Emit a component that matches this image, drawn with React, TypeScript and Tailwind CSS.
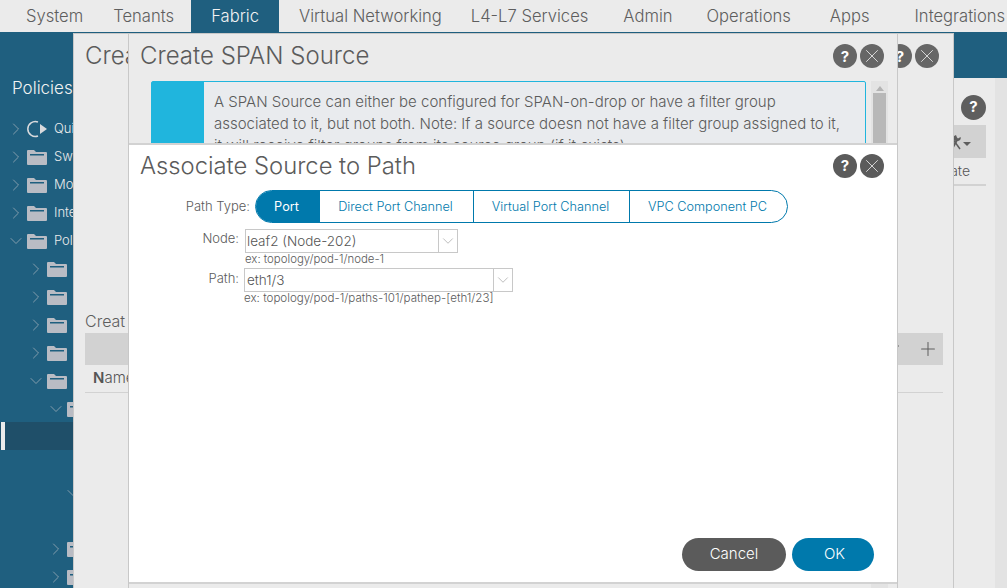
import { ChevronDown, ChevronRight, Plus, X } from "lucide-react";

const navItems = [
    { label: "System", cls: "ml-[26px]" },
    { label: "Tenants", cls: "ml-[30px]" },
    { label: "Virtual Networking", cls: "ml-[20px]" },
    { label: "L4-L7 Services", cls: "ml-[29px]" },
    { label: "Admin", cls: "ml-[35px]" },
    { label: "Operations", cls: "ml-[34px]" },
    { label: "Apps", cls: "ml-[39px]" },
    { label: "Integrations", cls: "ml-[45px]" },
];

const Folder = () => (
    <svg width="20" height="16" viewBox="0 0 20 16" className="shrink-0">
        <path d="M0 2 Q0 1 1 1 H7 L9 3 H19 Q20 3 20 4 V15 Q20 16 19 16 H1 Q0 16 0 15 Z" fill="#b9bcc4" />
        <rect x="3" y="5" width="14" height="1.5" fill="#1f5f7f" />
    </svg>
);

const QuickIcon = () => (
    <svg width="20" height="18" viewBox="0 0 20 18" className="shrink-0">
        <path d="M11 2 A7.5 7.5 0 1 0 11 16" fill="none" stroke="#d8dadd" strokeWidth="1.5" />
        <path d="M13 4 L20 9 L13 14 Z" fill="#d8dadd" />
    </svg>
);

const ToolsIcon = () => (
    <svg width="10" height="16" viewBox="0 0 10 16" className="shrink-0">
        <path d="M1 15 L6 6" stroke="#5e5e5e" strokeWidth="2" fill="none" />
        <path d="M5 1 A3 3 0 0 0 6 7 A3 3 0 0 0 9.500 3 L7 4.500 L6 3.500 Z" fill="#5e5e5e" />
        <path d="M1 4 L9 15" stroke="#5e5e5e" strokeWidth="1.500" fill="none" />
    </svg>
);

interface treeRow {
    indent: string;
    open?: boolean;
    label?: string;
    quick?: boolean;
    noIcon?: boolean;
    selected?: boolean;
    empty?: boolean;
}

const treeRows: treeRow[] = [
    { indent: "pl-[6px]", label: "Quick Start", quick: true },
    { indent: "pl-[6px]", label: "Switches" },
    { indent: "pl-[6px]", label: "Modules" },
    { indent: "pl-[6px]", label: "Interfaces" },
    { indent: "pl-[6px]", label: "Policies", open: true },
    { indent: "pl-[26px]" },
    { indent: "pl-[26px]" },
    { indent: "pl-[26px]" },
    { indent: "pl-[26px]" },
    { indent: "pl-[26px]", open: true },
    { indent: "pl-[46px]", open: true },
    { indent: "", selected: true, empty: true },
    { indent: "", empty: true },
    { indent: "pl-[63px]", open: true, noIcon: true },
    { indent: "", empty: true },
    { indent: "pl-[46px]" },
    { indent: "pl-[46px]" },
];

const TreeRow = ({ row }: { row: treeRow }) => {
    if (row.empty) {
        return (
            <div className={row.selected ? "relative -mt-px mb-px h-[28px] bg-[#1f4f69]" : "h-[28px]"}>
                {row.selected && <div className="absolute left-[1px] top-0 h-full w-[4px] bg-[#ebebeb]" />}
            </div>
        );
    }
    return (
        <div className={`flex h-[28px] items-center ${row.indent}`}>
            {row.open ? (
                <ChevronDown size={20} strokeWidth={1} className="mr-[1px] shrink-0 text-[#95a8b4]" />
            ) : (
                <ChevronRight size={20} strokeWidth={1} className="mr-[1px] shrink-0 text-[#95a8b4]" />
            )}
            {!row.noIcon && (row.quick ? <QuickIcon /> : <Folder />)}
            {row.label && <span className="ml-[7px] text-[13px] font-light whitespace-nowrap text-[#ebebeb]">{row.label}</span>}
        </div>
    );
};

const RoundButtons = ({ color }: { color: string }) => (
    <div className="flex items-center gap-[3px]">
        <div className={`flex h-[24px] w-[24px] items-center justify-center rounded-full text-[15px] leading-none font-bold text-white ${color}`}>?</div>
        <div className={`flex h-[24px] w-[24px] items-center justify-center rounded-full text-white ${color}`}>
            <X size={22} strokeWidth={0.8} />
        </div>
    </div>
);

const Select = ({ value, cls, arrow }: { value: string; cls: string; arrow: string }) => (
    <div className={`flex h-[24px] border border-[#c8c8c8] bg-white ${cls}`}>
        <div className={`pl-[1px] text-[13.5px] leading-[22px] font-light text-[#555] ${arrow}`}>{value}</div>
        <div className="flex flex-1 items-center justify-center border-l border-[#c8c8c8]">
            <ChevronDown size={18} strokeWidth={1} className="text-[#a8a8a8]" />
        </div>
    </div>
);

const segments = [
    { label: "Direct Port Channel", cls: "w-[153px]" },
    { label: "Virtual Port Channel", cls: "w-[156px] border-l border-[#0079ac]" },
    { label: "VPC Component PC", cls: "flex-1 border-l border-[#0079ac]" },
];

export default function App() {
    return (
        <div className="relative flex h-[588px] w-[1007px] flex-col overflow-hidden bg-[#1f5f7f] font-[Inter,sans-serif]">
            <nav className="flex h-[32px] shrink-0 items-center overflow-hidden bg-[#ebebeb] text-[16.6px] font-light whitespace-nowrap text-[#5e5e5e]">
                <span className={navItems[0].cls}>{navItems[0].label}</span>
                <span className={navItems[1].cls}>{navItems[1].label}</span>
                <span className="ml-[17px] flex h-full w-[88px] items-center justify-center bg-[#1f5f7f] text-[#f2f2f2]">Fabric</span>
                {navItems.slice(2).map((item) => (
                    <span key={item.label} className={item.cls}>{item.label}</span>
                ))}
            </nav>

            <div className="flex min-h-0 flex-1">
                <aside className="w-[300px] shrink-0 overflow-hidden">
                    <div className="pt-[44px] pl-[12px] text-[17px] leading-[24px] font-light text-[#f2f2f2]">Policies</div>
                    <div className="mt-[15px]">
                        {treeRows.map((row, i) => (
                            <TreeRow key={i} row={row} />
                        ))}
                    </div>
                </aside>
                <main className="flex min-w-0 flex-1 flex-col">
                    <div className="h-[46px] shrink-0" />
                    <div className="flex-1 bg-[#e3e3e3] pr-[12px]">
                        <div className="flex h-full flex-col items-end bg-[#ebebeb] pt-[17px] pr-[9px]">
                            <div className="flex h-[25px] w-[25px] items-center justify-center rounded-full bg-[#5e5e5e] text-[15px] font-bold text-white">?</div>
                            <div className="mt-[5px] flex h-[33px] w-full items-center justify-end bg-[#d2d2d2] pr-[15px] text-[#5e5e5e]">
                                <ToolsIcon />
                                <span className="mt-[5px] ml-[2px] border-x-[4px] border-t-[4px] border-x-transparent border-t-[#5e5e5e]" />
                            </div>
                            <div className="h-[28px] w-full border-b-2 border-[#d2d2d2] pr-[16px] text-right text-[14px] leading-[26px] font-light text-[#555]">Create</div>
                        </div>
                    </div>
                </main>
            </div>

            {/* back dialog */}
            <section className="absolute top-[33px] left-[73px] flex h-[555px] w-[881px] flex-col border-x border-t border-[#c8c8c8] bg-[#ebebeb] px-[11px]">
                <div className="flex h-[44px] items-center justify-between pr-[3px]">
                    <span className="text-[24px] font-light whitespace-nowrap text-[#5b5b5b]">Crea</span>
                    <RoundButtons color="bg-[#666]" />
                </div>
                <div className="mt-[231px] text-[16px] leading-[24px] font-light whitespace-nowrap text-[#5e5e5e]">Creat</div>
                <div className="flex h-[32px] w-[858px] items-center justify-end bg-[#d2d2d2] pr-[4px] text-[#5e5e5e]">
                    <span className="mr-[18px] mb-[7px] h-[2px] w-[1px] bg-[#999]" />
                    <Plus size={22} strokeWidth={1.1} />
                </div>
                <div className="h-[28px] w-[858px] border-b border-[#d2d2d2] pl-[8px] text-[15px] leading-[26px] font-light text-[#555]">
                    <b className="font-semibold">N</b>ame
                </div>
            </section>

            {/* span source dialog */}
            <section className="absolute top-[33px] left-[128px] flex h-[555px] w-[770px] flex-col border-x border-t border-[#c8c8c8] bg-[#ebebeb]">
                <div className="flex h-[44px] items-center justify-between pr-[13px] pl-[11px]">
                    <span className="text-[24px] font-light text-[#5b5b5b]">Create SPAN Source</span>
                    <RoundButtons color="bg-[#666]" />
                </div>
                <div className="mt-[3px] flex min-h-0 flex-1 pl-[22px]">
                    <div className="flex h-[160px] w-[715px] rounded-t-[2px] border border-[#20b5dd] bg-[#e9ebee]">
                        <div className="w-[52px] shrink-0 bg-[#20b5dd]" />
                        <p className="w-[642px] pt-[9px] pl-[10px] text-[15px] leading-[22px] font-light text-[#5b5b5b]">
                            A SPAN Source can either be configured for SPAN-on-drop or have a filter group associated to it, but not both. Note: If a source doesn not have a filter group assigned to it, it will receive filter groups from its source group (if it exists).
                        </p>
                    </div>
                    <div className="ml-[5px] w-[17px] bg-[#e3e3e3] px-[2px]">
                        <div className="mx-auto mt-[5px] h-0 w-0 border-x-[4px] border-b-[5px] border-x-transparent border-b-[#b4b4b4]" />
                        <div className="mt-[2px] h-[200px] bg-[#b8b8b8]" />
                    </div>
                </div>
            </section>

            {/* path dialog */}
            <section className="absolute top-[143px] left-[129px] flex h-[441px] w-[768px] flex-col border-y-2 border-[#d2d2d2] bg-white">
                <div className="flex h-[41px] items-center justify-between pr-[13px] pl-[11px]">
                    <span className="text-[23.8px] font-light text-[#5b5b5b]">Associate Source to Path</span>
                    <RoundButtons color="bg-[#5b5b5b]" />
                </div>
                <div className="mt-[4px] flex items-center pl-[56px]">
                    <span className="w-[65px] text-right text-[13px] font-light text-[#5b5b5b]">Path Type:</span>
                    <div className="ml-[5px] flex h-[33px] w-[533px] rounded-full border border-[#0079ac] text-[12.7px] text-[#0079ac]">
                        <div className="flex w-[64px] items-center justify-center rounded-l-full bg-[#0079ac] pr-[3px] text-white">Port</div>
                        {segments.map((s) => (
                            <div key={s.label} className={`flex items-center justify-center pr-[2px] font-light ${s.cls}`}>{s.label}</div>
                        ))}
                    </div>
                </div>
                <div className="mt-[6px] flex pl-[70px]">
                    <span className="w-[40px] text-right text-[13px] leading-[18px] font-light text-[#5b5b5b]">Node:</span>
                    <div className="ml-[6px]">
                        <Select value="leaf2 (Node-202)" cls="w-[213px]" arrow="w-[194px]" />
                        <div className="text-[11.4px] leading-[12px] font-light text-[#5b5b5b]">ex: topology/pod-1/node-1</div>
                    </div>
                </div>
                <div className="mt-[3px] flex pl-[70px]">
                    <span className="w-[40px] pt-px text-right text-[13px] leading-[18px] font-light text-[#5b5b5b]">Path:</span>
                    <div className="ml-[5px]">
                        <Select value="eth1/3" cls="w-[269px]" arrow="w-[250px] pl-[2px]" />
                        <div className="text-[11.6px] leading-[12px] whitespace-nowrap font-light text-[#5b5b5b]">ex: topology/pod-1/paths-101/pathep-[eth1/23]</div>
                    </div>
                </div>
                <div className="mt-auto mb-[11px] flex justify-end gap-[6px] pr-[23px]">
                    <button className="h-[33px] w-[104px] rounded-full bg-[#5b5b5b] text-[15px] font-light text-white">Cancel</button>
                    <button className="h-[33px] w-[82px] rounded-full bg-[#0079ac] pl-[3px] text-[15px] font-light text-white">OK</button>
                </div>
            </section>
        </div>
    );
}
